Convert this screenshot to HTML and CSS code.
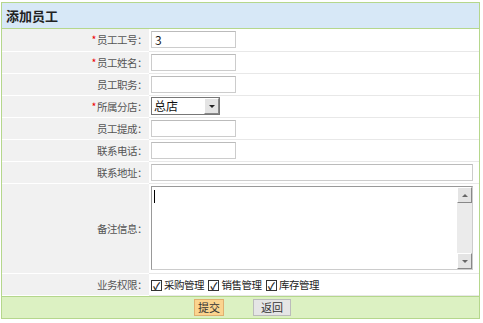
FILE: index.html
```html
<!DOCTYPE html>
<html lang="zh">
<head>
  <meta charset="UTF-8">
  <title>添加员工</title>
  <link rel="stylesheet" href="styles.css">
</head>
<body>
  <div class="box">
    <div class="box-title">添加员工</div>
    <table class="form">
      <tr>
        <th><span class="req">*</span>员工工号：</th>
        <td><input type="text" class="txt" value="3"></td>
      </tr>
      <tr>
        <th><span class="req">*</span>员工姓名：</th>
        <td><input type="text" class="txt"></td>
      </tr>
      <tr>
        <th>员工职务：</th>
        <td><input type="text" class="txt"></td>
      </tr>
      <tr>
        <th><span class="req">*</span>所属分店：</th>
        <td>
          <div class="sel">
            <span class="sel-val">总店</span>
            <span class="sel-btn"><span class="tri"></span></span>
          </div>
        </td>
      </tr>
      <tr>
        <th>员工提成：</th>
        <td><input type="text" class="txt"></td>
      </tr>
      <tr>
        <th>联系电话：</th>
        <td><input type="text" class="txt"></td>
      </tr>
      <tr>
        <th>联系地址：</th>
        <td><input type="text" class="txt wide"></td>
      </tr>
      <tr class="tall">
        <th>备注信息：</th>
        <td>
          <div class="memo">
            <div class="memo-text"><span class="caret"></span></div>
            <div class="scroll">
              <span class="sb-btn"><span class="tri up"></span></span>
              <span class="sb-btn"><span class="tri"></span></span>
            </div>
          </div>
        </td>
      </tr>
      <tr>
        <th>业务权限：</th>
        <td class="checks">
          <label><span class="cb">✓</span>采购管理</label>
          <label><span class="cb">✓</span>销售管理</label>
          <label><span class="cb">✓</span>库存管理</label>
        </td>
      </tr>
    </table>
    <div class="box-foot">
      <button class="btn btn-ok">提交</button>
      <button class="btn">返回</button>
    </div>
  </div>
</body>
</html>
```

FILE: styles.css
```css
* { box-sizing: border-box; }
body {
  margin: 0;
  padding: 2px 3px 0 1px;
  background: #fff;
  font-family: "Noto Sans CJK SC", "DejaVu Sans", sans-serif;
  font-size: 11px;
  color: #333;
}
.box {
  width: 479px;
  border: 1px solid #b5d78c;
}
.box-title {
  height: 26px;
  line-height: 25px;
  padding-left: 4px;
  background: #d7e8f7;
  border-bottom: 1px solid #b5d78c;
  font-weight: bold;
  font-size: 13px;
  color: #222;
}
.form {
  width: 100%;
  border-collapse: collapse;
}
.form th, .form td {
  height: 22px;
  padding: 0;
  border-bottom: 1px solid #e8e8e8;
}
.form th {
  width: 147px;
  background: #f1f1f1;
  border-bottom-color: #fff;
  text-align: right;
  font-weight: normal;
  font-size: 10.5px;
  color: #555;
  letter-spacing: -0.5px;
  padding-right: 2px;
}
.form td { padding-left: 2px; }
.form tr.tall th, .form tr.tall td { height: 90px; }
.req { color: #e00; margin-right: 1px; }
.txt {
  display: block;
  width: 85px;
  height: 17px;
  border: 1px solid #ccc;
  border-top-color: #bbb;
  padding: 0 3px;
  font-family: inherit;
  font-size: 12px;
  color: #222;
}
.txt.wide { width: 322px; }
.sel {
  display: flex;
  width: 69px;
  height: 18px;
  border: 1px solid #777;
  background: #fff;
}
.sel-val {
  flex: 1;
  line-height: 16px;
  padding-left: 2px;
  font-size: 12px;
  color: #111;
}
.sel-btn, .sb-btn {
  display: flex;
  align-items: center;
  justify-content: center;
  width: 15px;
  height: 16px;
  background: #e4e4e4;
  border: 1px solid;
  border-color: #fff #888 #888 #fff;
}
.tri {
  width: 0;
  height: 0;
  border-left: 3px solid transparent;
  border-right: 3px solid transparent;
  border-top: 3px solid #222;
}
.tri.up {
  border-top: 0;
  border-bottom: 3px solid #666;
}
.sb-btn .tri { border-top-color: #666; }
.memo {
  display: flex;
  width: 322px;
  height: 84px;
  border: 1px solid #ccc;
  border-top-color: #999;
  border-left-color: #999;
}
.memo-text {
  flex: 1;
  padding: 3px 2px;
}
.caret {
  display: block;
  width: 1px;
  height: 13px;
  background: #000;
}
.scroll {
  display: flex;
  flex-direction: column;
  justify-content: space-between;
  width: 15px;
  background: #ebebeb;
}
.checks label {
  margin-right: 2px;
  color: #222;
  font-size: 10.5px;
  letter-spacing: -0.5px;
}
.cb {
  display: inline-block;
  width: 11px;
  height: 11px;
  margin-right: 2px;
  border: 1px solid #333;
  font-size: 10px;
  font-weight: bold;
  line-height: 9px;
  text-align: center;
  letter-spacing: 0;
  vertical-align: -1px;
}
.box-foot {
  height: 22px;
  background: #dcf1c2;
  border-top: 1px solid #b5d78c;
  display: flex;
  align-items: center;
  padding-left: 192px;
  gap: 29px;
}
.btn {
  height: 17px;
  padding: 0;
  font-family: inherit;
  font-size: 11px;
  line-height: 15px;
  border: 1px solid #bbb;
  background: #e5e5e5;
  color: #333;
  width: 38px;
}
.btn-ok {
  width: 30px;
  background: #fbd48e;
  border-color: #e0b070;
}
```
